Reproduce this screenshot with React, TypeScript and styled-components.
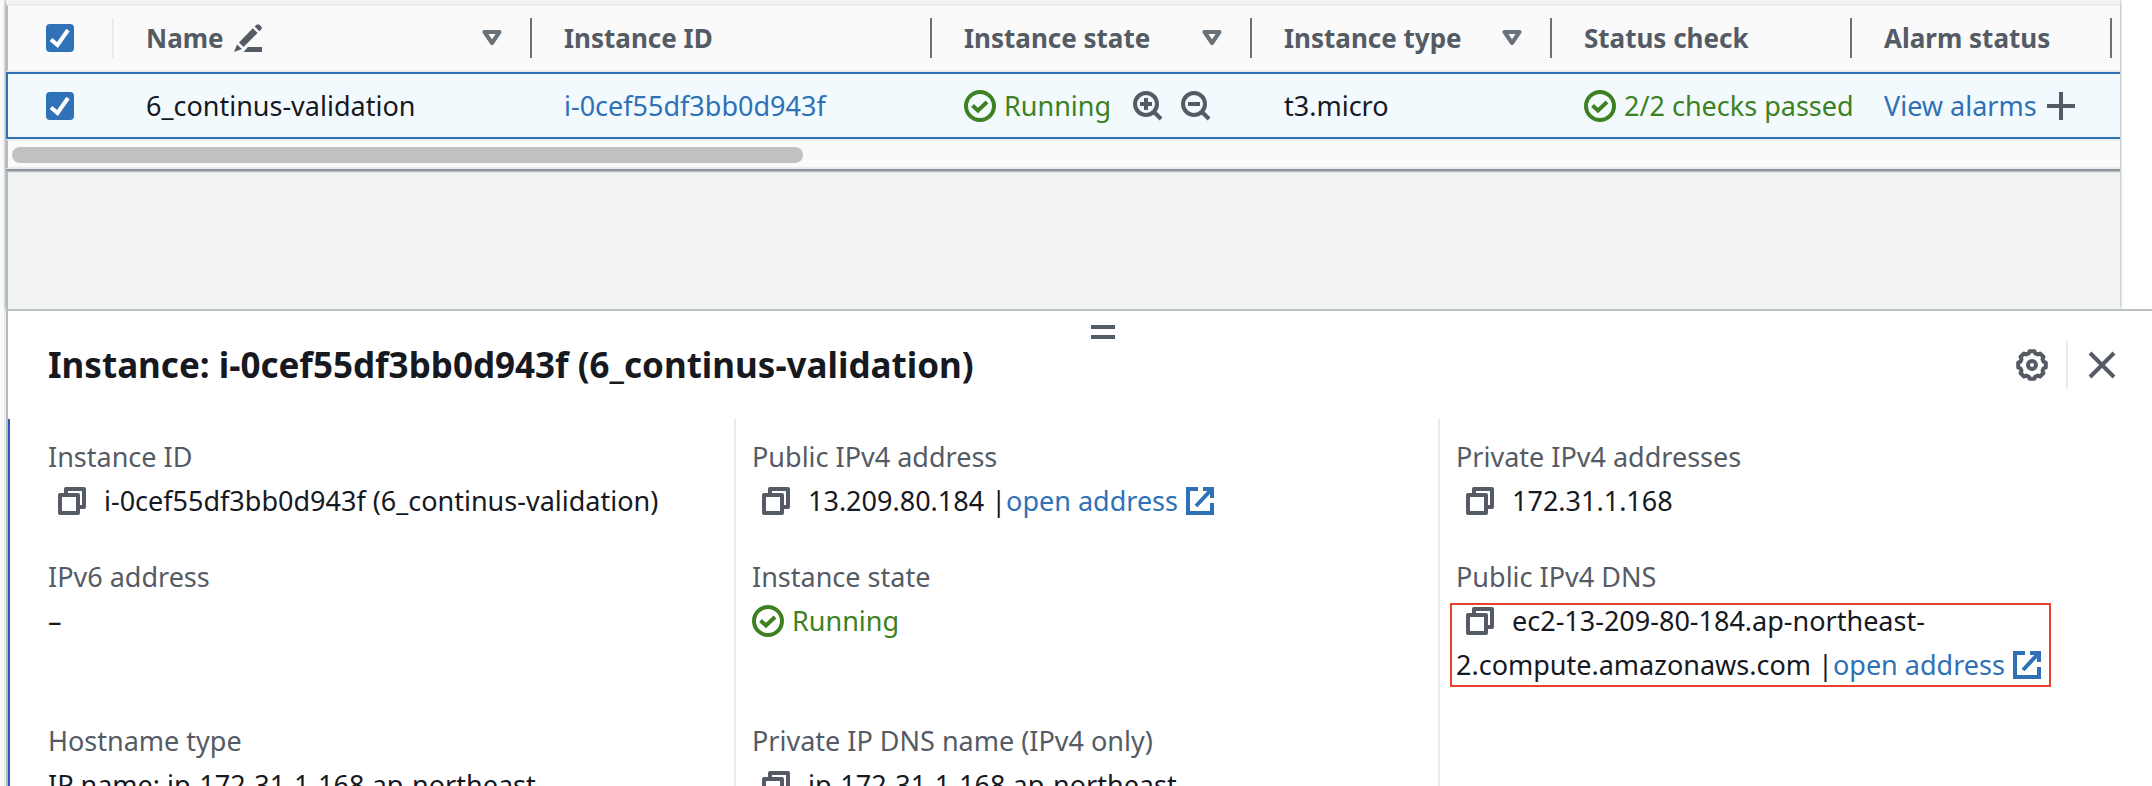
import React, { ReactNode } from "react";
import styled, { createGlobalStyle, css } from "styled-components";

const color = {
  text: "#16191f",
  muted: "#545b64",
  icon: "#687078",
  link: "#2f71b6",
  accent: "#2f72b8",
  success: "#3d8122",
  surface: "#fafafa",
  selected: "#f2fafe",
  line: "#e9ebed",
  edge: "#b4bbc0",
  canvas: "#f1f3f3",
  callout: "#e8442c",
};

const GlobalStyle = createGlobalStyle`
  *, *::before, *::after { box-sizing: border-box; }
  body {
    margin: 0;
    background: #fff;
    color: ${color.text};
    font-family: "Noto Sans", "Open Sans", sans-serif;
    font-size: 27px;
    line-height: 44px;
  }
`;

/* ---------- page frame ---------- */

const Page = styled.div`
  display: flex;
  height: 100vh;
  overflow: hidden;
`;

const Rail = styled.div`
  flex: none;
  width: 6px;
  background: ${color.surface};
  border-right: 2px solid ${color.line};
`;

const Main = styled.main`
  flex: 1;
  min-width: 0;
  display: flex;
  flex-direction: column;
`;

const Upper = styled.section`
  flex: none;
  margin-right: 32px;
  background: ${color.canvas};
  box-shadow: 0 0 3px #7d868c;
`;

const Workspace = styled.div`
  height: 138px;
  border-left: 2px solid ${color.edge};
`;

/* ---------- instance table ---------- */

const TableCard = styled.div`
  background: ${color.surface};
  border-bottom: 2px solid #8d979b;
  box-shadow: 0 1px 1px #b5bcc0;
`;

const Table = styled.table`
  width: 100%;
  table-layout: fixed;
  border-collapse: separate;
  border-spacing: 0;
  margin-top: 4px;
`;

const Col = styled.col<{ $w?: number }>`
  ${(p) => p.$w && css`width: ${p.$w}px;`}
`;

const Th = styled.th`
  height: 68px;
  padding: 0;
  border-top: 2px solid ${color.line};
  border-bottom: 2px solid ${color.line};
  color: ${color.muted};
  font-size: 26px;
  font-weight: 700;
  text-align: left;
  &:first-child { border-left: 2px solid ${color.edge}; }
  &:last-child { padding-right: 8px; }
`;

const HeadCell = styled.div<{ $check?: boolean }>`
  display: flex;
  align-items: center;
  gap: 10px;
  height: 40px;
  padding: ${(p) => (p.$check ? "0" : "0 28px 0 32px")};
  justify-content: ${(p) => (p.$check ? "center" : "flex-start")};
  border-right: 2px solid ${(p) => (p.$check ? color.line : color.icon)};
  white-space: nowrap;
`;

const Td = styled.td`
  height: 67px;
  padding: 0;
  background: ${color.selected};
  border-top: 2px solid ${color.accent};
  border-bottom: 2px solid ${color.accent};
  &:first-child { border-left: 2px solid ${color.accent}; }
`;

const BodyCell = styled.div<{ $check?: boolean }>`
  display: flex;
  align-items: center;
  gap: 10px;
  padding-left: ${(p) => (p.$check ? 0 : 32)}px;
  padding-right: ${(p) => (p.$check ? 2 : 0)}px;
  justify-content: ${(p) => (p.$check ? "center" : "flex-start")};
  overflow: hidden;
  white-space: nowrap;
`;

const CheckWrap = styled.label`
  display: grid;
  width: 28px;
  height: 28px;
  > * { grid-area: 1 / 1; }
  svg { pointer-events: none; }
`;

const CheckInput = styled.input`
  appearance: none;
  width: 28px;
  height: 28px;
  margin: 0;
  border-radius: 4px;
  background: ${color.accent};
`;

const IconButton = styled.button`
  display: inline-flex;
  align-items: center;
  justify-content: center;
  padding: 0;
  border: 0;
  background: none;
  color: ${color.muted};
  cursor: pointer;
`;

const SortButton = styled(IconButton)`
  margin-left: auto;
  color: ${color.icon};
`;

const FilterTools = styled.div`
  display: flex;
  gap: 18px;
  margin-left: 12px;
`;

const ScrollTrack = styled.div`
  padding: 6px 4px 4px;
  border: solid ${color.line};
  border-width: 2px 0;
  border-left: 2px solid ${color.edge};
`;

const ScrollThumb = styled.div`
  width: 37.6%;
  height: 16px;
  border-radius: 8px;
  background: #c1c1c1;
`;

/* ---------- shared text parts ---------- */

const Link = styled.a`
  color: ${color.link};
  text-decoration: none;
`;

const Status = styled.span`
  display: inline-flex;
  align-items: center;
  gap: 8px;
  color: ${color.success};
  svg { flex: none; }
`;

/* ---------- details panel ---------- */

const Panel = styled.section`
  flex: 1;
  min-height: 0;
  overflow: hidden;
  display: flex;
  flex-direction: column;
  background: #fff;
  border-top: 2px solid #bcc1c5;
  border-left: 2px solid ${color.edge};
`;

const HandleRow = styled.div`
  flex: none;
  display: flex;
  justify-content: center;
  height: 30px;
  padding: 12px 0 0 46px;
`;

const PanelHeader = styled.header`
  flex: none;
  display: flex;
  align-items: center;
  height: 48px;
  margin-bottom: 30px;
  padding: 0 32px 0 40px;
`;

const Title = styled.h2`
  flex: 1;
  margin: 0;
  font-size: 35px;
  font-weight: 700;
`;

const CloseSlot = styled.div`
  display: flex;
  height: 48px;
  margin-left: 18px;
  padding-left: 16px;
  border-left: 2px solid ${color.line};
`;

const Details = styled.dl`
  flex: 1;
  display: grid;
  grid-template-columns: repeat(3, minmax(0, 1fr));
  grid-auto-rows: max-content;
  margin: 0;
  padding: 0 10px 0 20px;
  border-left: 2px solid #2a5cb4;
`;

const Detail = styled.div`
  padding: 16px;
  border-left: 2px solid ${color.line};
  &:nth-child(3n + 1) { border-left-color: transparent; }
`;

const Label = styled.dt`
  color: ${color.muted};
`;

const Value = styled.dd`
  position: relative;
  width: fit-content;
  margin: 0;
  white-space: nowrap;
  svg { vertical-align: middle; }
`;

const Callout = styled.span`
  position: absolute;
  inset: 4px -10px 0 -6px;
  border: 2px solid ${color.callout};
  pointer-events: none;
`;

const CopyButton = styled(IconButton)`
  vertical-align: top;
  height: 44px;
  margin: 0 18px 0 10px;
`;

const ExternalLink = styled(Link)`
  display: inline-flex;
  align-items: center;
  gap: 8px;
  vertical-align: top;
`;

/* ---------- icons ---------- */

const CheckMark = () => (
  <svg width="28" height="28" viewBox="0 0 28 28" fill="none" stroke="#fff" strokeWidth="4" aria-hidden="true">
    <path d="M5 15.5 11.5 21 22 6" />
  </svg>
);

const PencilIcon = () => (
  <svg width="28" height="28" viewBox="0 0 28 28" fill="currentColor" aria-hidden="true">
    <path d="M0 28 3 20.5 8 25Z" />
    <path d="M5 18.5 18.8 4.3 23.6 9 9.5 23Z" />
    <path d="M20.6 2.6 22.6.7Q24-.3 25.4.8L27.3 2.6Q28.4 4 27.2 5.4L25.4 7.2Z" />
    <path d="M14 23H28V28H9.5Z" />
  </svg>
);

const TriangleIcon = () => (
  <svg width="20" height="16" viewBox="0 0 20 16" fill="none" stroke="currentColor" strokeWidth="4" strokeLinejoin="round" aria-hidden="true">
    <path d="M2.5 2H17.5L10 13Z" />
  </svg>
);

const SuccessIcon = () => (
  <svg width="32" height="32" viewBox="0 0 32 32" fill="none" stroke="currentColor" strokeWidth="4" aria-hidden="true">
    <circle cx="16" cy="16" r="14" />
    <path d="M8.5 15.5 14 20.5 23 12" />
  </svg>
);

const ZoomIcon = ({ plus }: { plus?: boolean }) => (
  <svg width="30" height="30" viewBox="0 0 30 30" fill="none" stroke="currentColor" strokeWidth="4" aria-hidden="true">
    <circle cx="13" cy="13" r="11" />
    <path d="M20.5 20.5 28 28" />
    <path d={plus ? "M7 13H19M13 7V19" : "M7 13H19"} />
  </svg>
);

const PlusIcon = () => (
  <svg width="28" height="28" viewBox="0 0 28 28" fill="none" stroke="currentColor" strokeWidth="4" aria-hidden="true">
    <path d="M0 14H28M14 0V28" />
  </svg>
);

const CopyIcon = () => (
  <svg width="28" height="28" viewBox="0 0 28 28" fill="none" stroke="currentColor" strokeWidth="4" strokeLinejoin="round" aria-hidden="true">
    <path d="M2 8H20V26H2Z" />
    <path d="M8 7V2H26V20H21" />
  </svg>
);

const ExternalIcon = () => (
  <svg width="28" height="28" viewBox="0 0 28 28" fill="none" stroke="currentColor" strokeWidth="4" aria-hidden="true">
    <path d="M12 2H2V26H26V16" />
    <path d="M17 2H26V11M25 3 10 19" />
  </svg>
);

const gearOutline = (() => {
  const points: string[] = [];
  const at = (deg: number, r: number) => {
    const a = (deg * Math.PI) / 180;
    points.push(`${(16 + r * Math.cos(a)).toFixed(2)} ${(16 + r * Math.sin(a)).toFixed(2)}`);
  };
  for (let i = 0; i < 8; i++) {
    at(i * 45 - 10, 14);
    at(i * 45 + 10, 14);
    at(i * 45 + 16, 12);
    at(i * 45 + 29, 12);
  }
  return `M${points.join("L")}Z`;
})();

const GearIcon = () => (
  <svg width="32" height="32" viewBox="0 0 32 32" fill="none" stroke="currentColor" strokeWidth="4" strokeLinejoin="round" aria-hidden="true">
    <path d={gearOutline} />
    <circle cx="16" cy="16" r="4" />
  </svg>
);

const CloseIcon = () => (
  <svg width="36" height="36" viewBox="0 0 36 36" fill="none" stroke="currentColor" strokeWidth="4" aria-hidden="true">
    <path d="M6 6 30 30M30 6 6 30" />
  </svg>
);

const HandleIcon = () => (
  <svg width="24" height="14" viewBox="0 0 24 14" fill="currentColor" aria-hidden="true">
    <path d="M0 0H24V4H0ZM0 10H24V14H0Z" />
  </svg>
);

/* ---------- composed parts ---------- */

const Checkbox = ({ label }: { label: string }) => (
  <CheckWrap>
    <CheckInput type="checkbox" aria-label={label} defaultChecked />
    <CheckMark />
  </CheckWrap>
);

const columns: { title: string; width?: number; sortable?: boolean; editable?: boolean }[] = [
  { title: "Name", width: 418, sortable: true, editable: true },
  { title: "Instance ID", width: 400 },
  { title: "Instance state", width: 320, sortable: true },
  { title: "Instance type", width: 300, sortable: true },
  { title: "Status check", width: 300 },
  { title: "Alarm status" },
];

const Copy = ({ what }: { what: string }) => (
  <CopyButton type="button" aria-label={`Copy ${what}`}>
    <CopyIcon />
  </CopyButton>
);

const OpenAddress = () => (
  <ExternalLink href="#open">
    open address
    <ExternalIcon />
  </ExternalLink>
);

const Running = () => (
  <Status>
    <SuccessIcon />
    Running
  </Status>
);

const Field = ({ label, callout, children }: { label: string; callout?: boolean; children?: ReactNode }) => (
  <Detail>
    <Label>{label}</Label>
    <Value>
      {children}
      {callout && <Callout />}
    </Value>
  </Detail>
);

export default function App() {
  return (
    <>
      <GlobalStyle />
      <Page>
        <Rail />
        <Main>
          <Upper>
            <TableCard>
              <Table>
                <colgroup>
                  <Col $w={108} />
                  {columns.map((c) => (
                    <Col key={c.title} $w={c.width} />
                  ))}
                </colgroup>
                <thead>
                  <tr>
                    <Th scope="col">
                      <HeadCell $check>
                        <Checkbox label="Select all instances" />
                      </HeadCell>
                    </Th>
                    {columns.map((c) => (
                      <Th key={c.title} scope="col">
                        <HeadCell>
                          {c.title}
                          {c.editable && <PencilIcon />}
                          {c.sortable && (
                            <SortButton type="button" aria-label={`Sort by ${c.title}`}>
                              <TriangleIcon />
                            </SortButton>
                          )}
                        </HeadCell>
                      </Th>
                    ))}
                  </tr>
                </thead>
                <tbody>
                  <tr>
                    <Td>
                      <BodyCell $check>
                        <Checkbox label="Select 6_continus-validation" />
                      </BodyCell>
                    </Td>
                    <Td>
                      <BodyCell>6_continus-validation</BodyCell>
                    </Td>
                    <Td>
                      <BodyCell>
                        <Link href="#instance">i-0cef55df3bb0d943f</Link>
                      </BodyCell>
                    </Td>
                    <Td>
                      <BodyCell>
                        <Running />
                        <FilterTools>
                          <IconButton type="button" aria-label="Include this state">
                            <ZoomIcon plus />
                          </IconButton>
                          <IconButton type="button" aria-label="Exclude this state">
                            <ZoomIcon />
                          </IconButton>
                        </FilterTools>
                      </BodyCell>
                    </Td>
                    <Td>
                      <BodyCell>t3.micro</BodyCell>
                    </Td>
                    <Td>
                      <BodyCell>
                        <Status>
                          <SuccessIcon />
                          2/2 checks passed
                        </Status>
                      </BodyCell>
                    </Td>
                    <Td>
                      <BodyCell>
                        <Link href="#alarms">View alarms</Link>
                        <IconButton type="button" aria-label="Create alarm">
                          <PlusIcon />
                        </IconButton>
                      </BodyCell>
                    </Td>
                  </tr>
                </tbody>
              </Table>
              <ScrollTrack>
                <ScrollThumb />
              </ScrollTrack>
            </TableCard>
            <Workspace />
          </Upper>
          <Panel>
            <HandleRow>
              <IconButton type="button" aria-label="Resize panel">
                <HandleIcon />
              </IconButton>
            </HandleRow>
            <PanelHeader>
              <Title>Instance: i-0cef55df3bb0d943f (6_continus-validation)</Title>
              <IconButton type="button" aria-label="Panel settings">
                <GearIcon />
              </IconButton>
              <CloseSlot>
                <IconButton type="button" aria-label="Close panel">
                  <CloseIcon />
                </IconButton>
              </CloseSlot>
            </PanelHeader>
            <Details>
              <Field label="Instance ID">
                <Copy what="instance ID" />
                i-0cef55df3bb0d943f (6_continus-validation)
              </Field>
              <Field label="Public IPv4 address">
                <Copy what="public IPv4 address" />
                13.209.80.184 |<OpenAddress />
              </Field>
              <Field label="Private IPv4 addresses">
                <Copy what="private IPv4 address" />
                172.31.1.168
              </Field>
              <Field label="IPv6 address">–</Field>
              <Field label="Instance state">
                <Running />
              </Field>
              <Field label="Public IPv4 DNS" callout>
                <Copy what="public IPv4 DNS" />
                ec2-13-209-80-184.ap-northeast-
                <br />
                2.compute.amazonaws.com |<OpenAddress />
              </Field>
              <Field label="Hostname type">
                IP name: ip-172-31-1-168.ap-northeast-
                <br />
                2.compute.internal
              </Field>
              <Field label="Private IP DNS name (IPv4 only)">
                <Copy what="private IP DNS name" />
                ip-172-31-1-168.ap-northeast-
                <br />
                2.compute.internal
              </Field>
              <Detail />
            </Details>
          </Panel>
        </Main>
      </Page>
    </>
  );
}
